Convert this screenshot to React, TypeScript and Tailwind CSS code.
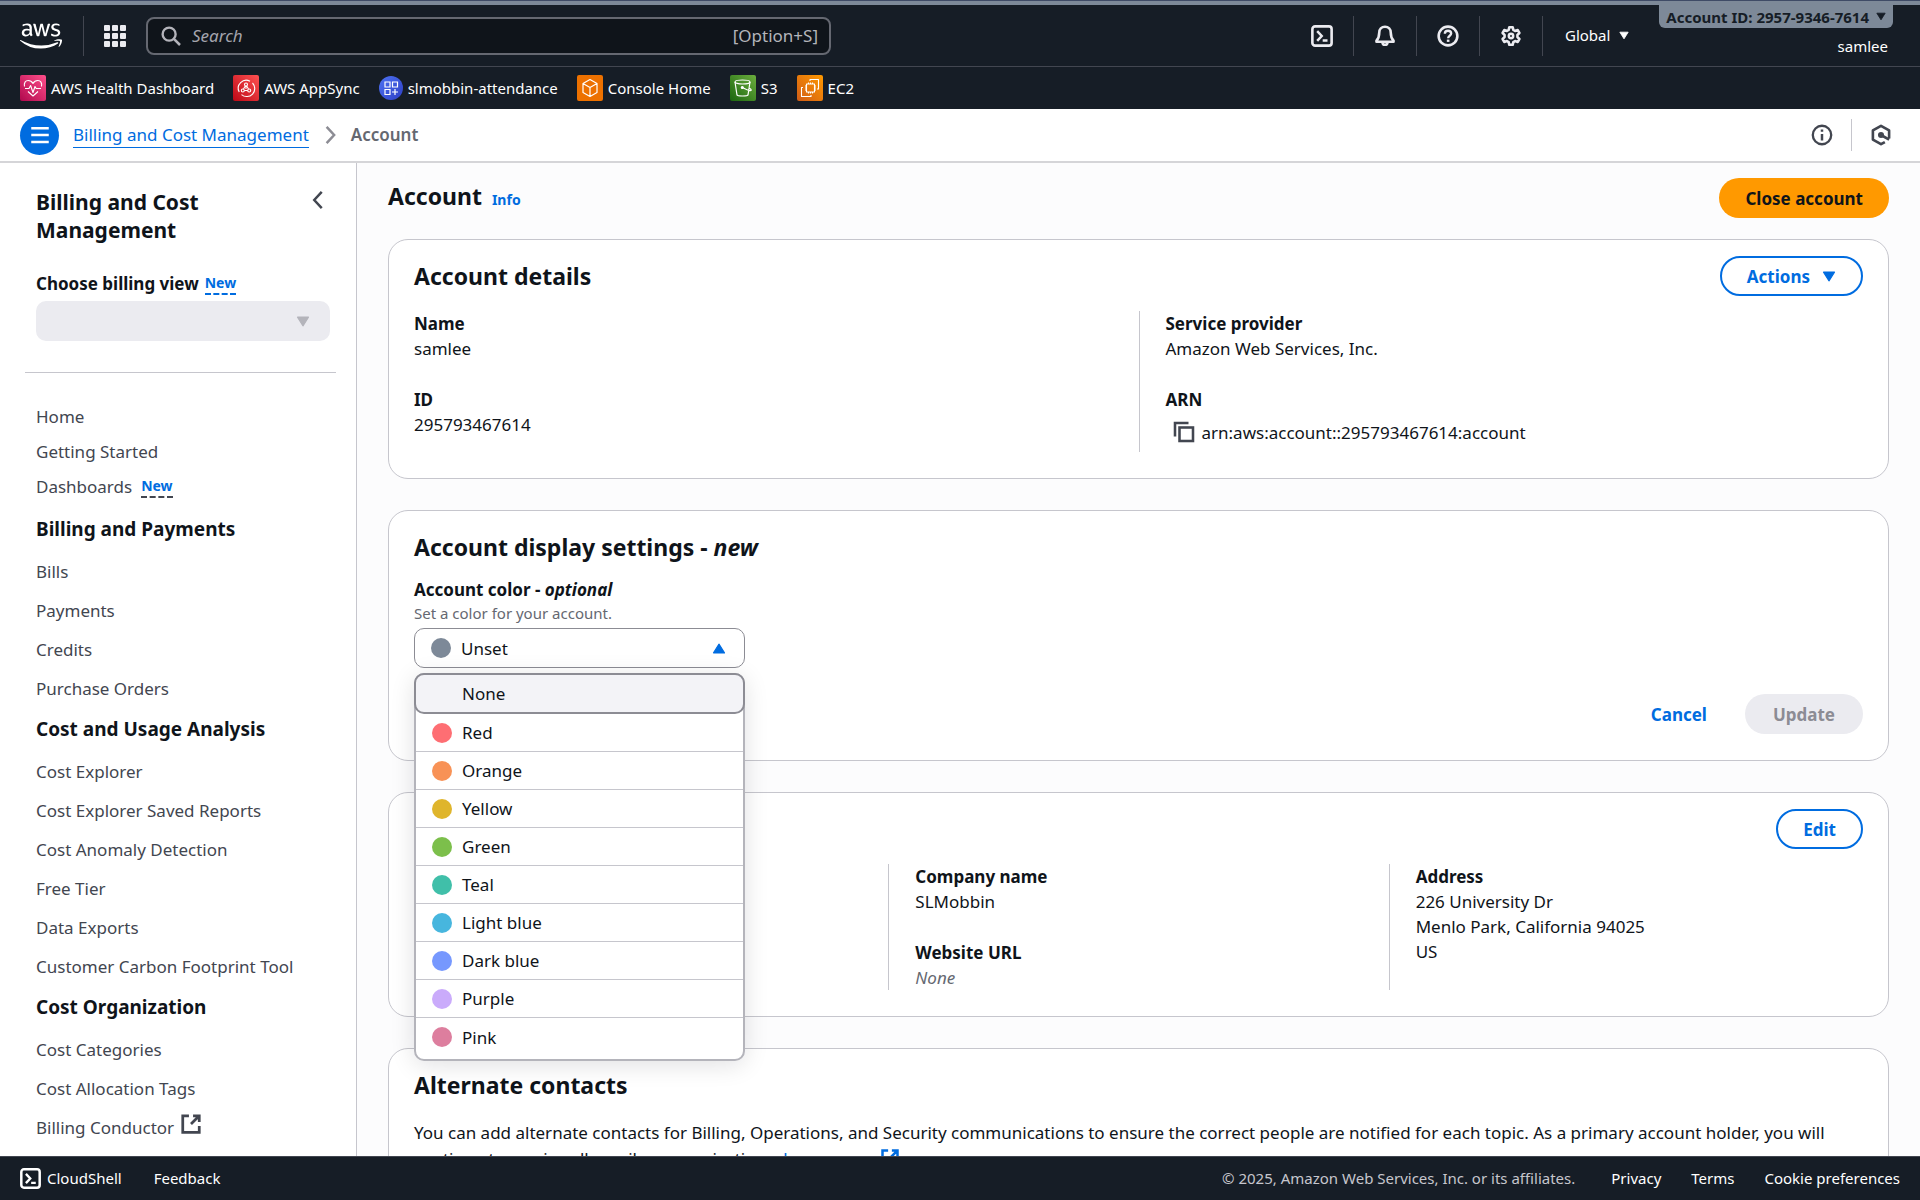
import type { ReactNode } from "react";
import { FaAws } from "react-icons/fa";

type IconProps = { className?: string };

function Icon({ className = "size-5", children }: IconProps & { children: ReactNode }) {
  return (
    <svg
      viewBox="0 0 16 16"
      className={className}
      fill="none"
      stroke="currentColor"
      strokeWidth="2"
      strokeLinejoin="round"
      aria-hidden="true"
    >
      {children}
    </svg>
  );
}

const TriangleDown = ({ className }: IconProps) => (
  <svg viewBox="0 0 12 10" className={className} fill="currentColor" stroke="currentColor" strokeLinejoin="round" aria-hidden="true">
    <path d="M1 1h10L6 9z" />
  </svg>
);

const TriangleUp = ({ className }: IconProps) => (
  <svg viewBox="0 0 12 10" className={className} fill="currentColor" stroke="currentColor" strokeLinejoin="round" aria-hidden="true">
    <path d="M1 9h10L6 1z" />
  </svg>
);

const ShellIcon = ({ className }: IconProps) => (
  <Icon className={className}>
    <rect x="1" y="1" width="14" height="14" rx="2" strokeWidth="1.9" />
    <path d="M4.5 4.5 7.8 8l-3.3 3.5M8.5 11.3h3.5" strokeWidth="1.8" strokeLinejoin="miter" />
  </Icon>
);

const BellIcon = () => (
  <Icon className="size-[22px]">
    <path
      d="M8 1.3c-2.500 0-4.200 1.900-4.200 4.300 0 3-.7 4.400-2 5.800v.8h12.400v-.8c-1.300-1.400-2-2.800-2-5.800 0-2.400-1.700-4.300-4.200-4.300z"
      strokeWidth="1.900"
    />
    <path d="M6.200 12.500c0 1.200.8 1.900 1.800 1.900s1.800-.7 1.800-1.900" strokeWidth="1.900" />
  </Icon>
);

const HelpIcon = () => (
  <Icon className="size-[22px]">
    <circle cx="8" cy="8" r="6.800" strokeWidth="1.900" />
    <path d="M5.700 6.400c0-1.300 1-2.200 2.300-2.200s2.300.9 2.300 2c0 1.600-2.200 1.600-2.200 3.400" strokeWidth="1.700" />
    <path d="M8.100 10.600v1.700" strokeWidth="1.900" />
  </Icon>
);

const GearIcon = () => (
  <Icon className="size-[22px]">
    <path
      d="M6.800 1.100h2.400l.5 1.900 1.300.8 1.900-.6 1.200 2.100-1.400 1.400v1.600l1.400 1.400-1.200 2.100-1.900-.6-1.300.8-.5 1.900H6.800L6.300 12 5 11.200l-1.900.6-1.200-2.100 1.400-1.400V6.700L1.900 5.300l1.200-2.100L5 3.800 6.300 3z"
      strokeWidth="1.900"
      transform="translate(0 .5)"
    />
    <circle cx="8" cy="8" r="1.600" strokeWidth="1.800" />
  </Icon>
);

const ExternalIcon = ({ className }: IconProps) => (
  <Icon className={className}>
    <path d="M6.500 2H2v12h12V9.500M9.500 2H14v4.500M14 2 8 8" strokeLinejoin="miter" />
  </Icon>
);

const CopyIcon = () => (
  <Icon className="size-6">
    <path d="M2 11V2h9" strokeWidth="1.700" strokeLinejoin="miter" />
    <rect x="5" y="5" width="9" height="9" strokeWidth="1.700" strokeLinejoin="miter" />
  </Icon>
);

const InfoIcon = () => (
  <Icon className="size-[22px]">
    <circle cx="8" cy="8" r="6.700" strokeWidth="1.700" />
    <path d="M8 7.200V12M8 4v1.700" strokeWidth="1.800" />
  </Icon>
);

const HexIcon = () => (
  <Icon className="size-[22px]">
    <path d="M13.900 10.600V4.700L8 1.300 2.100 4.700v6.600L8 14.700l2.800-1.600" strokeWidth="1.900" />
    <circle cx="8" cy="8" r="2.200" fill="currentColor" stroke="none" />
    <path d="m8 8 5.900 3.400" strokeWidth="1.900" />
  </Icon>
);

const HealthTile = () => (
  <svg viewBox="0 0 26 26" className="size-[26px]" fill="none" stroke="white" strokeWidth="1.100" strokeLinejoin="round" aria-hidden="true">
    <defs>
      <linearGradient id="health" x1="0" y1="1" x2="1" y2="0">
        <stop stopColor="#b0084d" />
        <stop offset="1" stopColor="#ff4f8b" />
      </linearGradient>
    </defs>
    <rect width="26" height="26" rx="2" fill="url(#health)" stroke="none" />
    <path d="M4.500 11.500c-.8-3.600 1-6 3.700-6 2.300 0 3.800 1.100 4.800 2.900 1-1.800 2.500-2.900 4.800-2.900 2.700 0 4.500 2.400 3.700 6" />
    <path d="M5 13.500h4l1.600-3 2.400 7 2-6 1.200 2h4.800" />
    <path d="M8 16.500l5 4.500 5-4.500" />
  </svg>
);

const AppSyncTile = () => (
  <svg viewBox="0 0 26 26" className="size-[26px]" fill="none" stroke="white" strokeWidth="1.100" aria-hidden="true">
    <defs>
      <linearGradient id="appsync" x1="0" y1="1" x2="1" y2="0">
        <stop stopColor="#bd0816" />
        <stop offset="1" stopColor="#ff5252" />
      </linearGradient>
    </defs>
    <rect width="26" height="26" rx="2" fill="url(#appsync)" stroke="none" />
    <path d="M17 6.200A8 8 0 0 0 6.200 17M8.500 19.600A8 8 0 0 0 19.500 8" />
    <circle cx="13" cy="9.500" r="1.500" />
    <circle cx="9.800" cy="15.500" r="1.500" />
    <circle cx="16.200" cy="15.500" r="1.500" />
    <path d="M12.300 11l-1.800 3M13.700 11l1.800 3M11.300 15.500h3.400M13 11v3" />
  </svg>
);

const AppTile = () => (
  <svg viewBox="0 0 24 24" className="size-6" fill="none" stroke="white" strokeWidth="1.200" aria-hidden="true">
    <defs>
      <linearGradient id="app" x1="0" y1="0" x2="1" y2="1">
        <stop stopColor="#4d72f3" />
        <stop offset="1" stopColor="#2e3fc4" />
      </linearGradient>
    </defs>
    <circle cx="12" cy="12" r="12" fill="url(#app)" stroke="none" />
    <path d="M6 6h5v5H6zM13.500 6h5v5h-5zM6 13.500h5v5H6zM16 13v6M13 16h6" />
  </svg>
);

const ConsoleTile = () => (
  <svg viewBox="0 0 26 26" className="size-[26px]" fill="none" stroke="white" strokeWidth="1.200" strokeLinejoin="round" aria-hidden="true">
    <rect width="26" height="26" rx="2" fill="#ed7100" stroke="none" />
    <path d="M13 4.500l7 4v9l-7 4-7-4v-9zM6 8.500l7 4 7-4M13 12.500v9" />
  </svg>
);

const S3Tile = () => (
  <svg viewBox="0 0 26 26" className="size-[26px]" fill="none" stroke="white" strokeWidth="1.200" strokeLinejoin="round" aria-hidden="true">
    <defs>
      <linearGradient id="s3" x1="0" y1="1" x2="1" y2="0">
        <stop stopColor="#1b660f" />
        <stop offset="1" stopColor="#6cae3e" />
      </linearGradient>
    </defs>
    <rect width="26" height="26" rx="2" fill="url(#s3)" stroke="none" />
    <ellipse cx="12.500" cy="7" rx="7.500" ry="2" />
    <path d="M5 7l2 13c.4 1.300 10.600 1.300 11 0L20 7M12.500 12.500c3 1.800 6.500 3.300 8.500 3 .8-.8-1.500-2.300-2-2.500" />
    <circle cx="12.300" cy="12.500" r="1" fill="white" />
  </svg>
);

const Ec2Tile = () => (
  <svg viewBox="0 0 26 26" className="size-[26px]" fill="none" stroke="white" strokeWidth="1.100" strokeLinejoin="round" aria-hidden="true">
    <defs>
      <linearGradient id="ec2" x1="0" y1="1" x2="1" y2="0">
        <stop stopColor="#d05c17" />
        <stop offset="1" stopColor="#f90" />
      </linearGradient>
    </defs>
    <rect width="26" height="26" rx="2" fill="url(#ec2)" stroke="none" />
    <path d="M9.500 9h8v8h-8zM8 11h1.500M8 13h1.500M8 15h1.500M17.500 11H19M17.500 13H19M17.500 15H19M11.500 7.500V9M13.500 7.500V9M15.500 7.500V9M11.500 17v1.500M13.500 17v1.500M15.500 17v1.500" />
    <path d="M13 6V4.500h8.500V14h-1.500M6 12.500H4.500v9H14V20" />
  </svg>
);

const favorites: { label: string; icon: ReactNode }[] = [
  { label: "AWS Health Dashboard", icon: <HealthTile /> },
  { label: "AWS AppSync", icon: <AppSyncTile /> },
  { label: "slmobbin-attendance", icon: <AppTile /> },
  { label: "Console Home", icon: <ConsoleTile /> },
  { label: "S3", icon: <S3Tile /> },
  { label: "EC2", icon: <Ec2Tile /> },
];

const utilities: { label: string; icon: ReactNode }[] = [
  { label: "CloudShell", icon: <ShellIcon className="size-[22px]" /> },
  { label: "Notifications", icon: <BellIcon /> },
  { label: "Support", icon: <HelpIcon /> },
  { label: "Settings", icon: <GearIcon /> },
];

const sections: { title: string; links: string[] }[] = [
  { title: "Billing and Payments", links: ["Bills", "Payments", "Credits", "Purchase Orders"] },
  {
    title: "Cost and Usage Analysis",
    links: [
      "Cost Explorer",
      "Cost Explorer Saved Reports",
      "Cost Anomaly Detection",
      "Free Tier",
      "Data Exports",
      "Customer Carbon Footprint Tool",
    ],
  },
  { title: "Cost Organization", links: ["Cost Categories", "Cost Allocation Tags", "Billing Conductor"] },
];

const colors: { name: string; swatch: string }[] = [
  { name: "Red", swatch: "bg-[#fe6e73]" },
  { name: "Orange", swatch: "bg-[#f89256]" },
  { name: "Yellow", swatch: "bg-[#dfb52c]" },
  { name: "Green", swatch: "bg-[#7cbf4b]" },
  { name: "Teal", swatch: "bg-[#40bfa9]" },
  { name: "Light blue", swatch: "bg-[#47b6de]" },
  { name: "Dark blue", swatch: "bg-[#7698fe]" },
  { name: "Purple", swatch: "bg-[#caabfb]" },
  { name: "Pink", swatch: "bg-[#dd7e9e]" },
];

function TopNav() {
  return (
    <header className="shrink-0 bg-[#161d26] text-white">
      <div className="h-[5px] border-t border-[#3f4b66] bg-[#7d8998]" />
      <div className="flex h-[62px] items-center border-b border-[#424650]">
        <a href="#aws" aria-label="AWS home" className="ml-5 flex w-[63px]">
          <FaAws className="size-[42px]" />
        </a>
        <div className="h-10 w-px bg-[#424650]" />
        <button type="button" aria-label="Services" className="ml-5 grid grid-cols-3 gap-[2px]">
          {Array.from({ length: 9 }, (_, i) => (
            <span key={i} className="size-[6px] rounded-[1px] bg-[#ebebf0]" />
          ))}
        </button>
        <label className="ml-5 flex h-[38px] w-full max-w-[685px] items-center rounded-lg border-2 border-[#656871] bg-[#0f141a] pr-[11px] pl-[13px] text-[#b4b4bb]">
          <Icon className="size-5">
            <circle cx="6.500" cy="6.500" r="5.200" strokeWidth="1.900" />
            <path d="m10.300 10.300 4.900 4.900" />
          </Icon>
          <input
            type="search"
            aria-label="Search"
            placeholder="Search"
            className="ml-[11px] min-w-0 flex-1 bg-transparent text-[17px] outline-none placeholder:text-[#a4a4ad] placeholder:italic"
          />
          <span className="text-[17px]">[Option+S]</span>
        </label>
        <div className="ml-auto flex items-center">
          {utilities.map((u) => (
            <button
              key={u.label}
              type="button"
              aria-label={u.label}
              className="flex h-10 w-[63px] items-center justify-center border-r border-[#424650] text-[#ebebf0]"
            >
              {u.icon}
            </button>
          ))}
          <button type="button" className="ml-[22px] flex items-center gap-[9px] text-[15px] whitespace-nowrap">
            Global <TriangleDown className="h-[9px] w-[10px]" />
          </button>
        </div>
        <div className="mr-[27px] ml-[30px] flex flex-col items-end self-start">
          <button
            type="button"
            className="flex h-[23px] items-center gap-[7px] rounded-b-md bg-[#7d8998] px-[7px] text-[15px] leading-5 font-bold whitespace-nowrap text-[#161d26]"
          >
            Account ID: 2957-9346-7614
            <TriangleDown className="h-[9px] w-[10px]" />
          </button>
          <span className="mt-2 mr-[5px] text-[15px] leading-5">samlee</span>
        </div>
      </div>
      <nav aria-label="Favorites" className="flex h-[42px] items-center gap-[19px] pl-5">
        {favorites.map((f) => (
          <a key={f.label} href="#favorite" className="flex items-center gap-[5px] text-[15px] leading-5 whitespace-nowrap">
            {f.icon}
            {f.label}
          </a>
        ))}
      </nav>
    </header>
  );
}

function Breadcrumbs() {
  return (
    <div className="flex h-[54px] shrink-0 items-center border-b-2 border-[#d5d5d8] bg-white pl-5 text-[17px]">
      <button
        type="button"
        aria-label="Open navigation"
        className="flex size-[39px] items-center justify-center rounded-full bg-[#006ce0] text-white"
      >
        <Icon className="size-5">
          <path d="M1 2.500h14M1 8h14M1 13.500h14" />
        </Icon>
      </button>
      <nav aria-label="Breadcrumb" className="ml-[14px] flex items-center">
        <a href="#billing" className="border-b border-[#006ce0] leading-6 text-[#006ce0]">
          Billing and Cost Management
        </a>
        <Icon className="ml-3 size-5 text-[#8c8c94]">
          <path d="m4.500 1.500 6 6.500-6 6.500" strokeLinejoin="miter" />
        </Icon>
        <span className="ml-[10px] font-semibold text-[#656871]">Account</span>
      </nav>
      <div className="mr-7 ml-auto flex items-center text-[#424650]">
        <button type="button" aria-label="Information">
          <InfoIcon />
        </button>
        <span className="mr-[18px] ml-[18px] h-8 w-px bg-[#c6c6cd]" />
        <button type="button" aria-label="Diagnostics">
          <HexIcon />
        </button>
      </div>
    </div>
  );
}

function Sidebar() {
  const link = "text-[17px] leading-[25px] text-[#424650]";
  return (
    <aside className="w-[357px] shrink-0 overflow-hidden border-r border-[#c6c6cd] bg-white">
      <div className="px-[26px]">
        <div className="flex items-start justify-between pt-[25px] pl-[10px]">
          <h2 className="w-52 text-[21px] leading-7 font-bold text-[#0f141a]">Billing and Cost Management</h2>
          <button type="button" aria-label="Close navigation" className="mt-[2px] mr-[2px] text-[#424650]">
            <Icon className="size-5">
              <path d="m11 1.500-6 6.500 6 6.500" strokeLinejoin="miter" />
            </Icon>
          </button>
        </div>
        <div className="mt-[27px] flex items-center gap-[6px] pl-[10px]">
          <label htmlFor="billing-view" className="text-[17px] leading-[25px] font-bold text-[#0f141a]">
            Choose billing view
          </label>
          <a href="#new-view" className="border-b-2 border-dashed border-[#006ce0] text-[14px] leading-5 font-bold text-[#006ce0]">
            New
          </a>
        </div>
        <div className="relative mt-[5px] ml-[10px]">
          <select
            id="billing-view"
            disabled
            className="h-10 w-full appearance-none rounded-[10px] bg-[#ebebf0]"
          />
          <TriangleDown className="pointer-events-none absolute top-[15px] right-5 h-[11px] w-[14px] text-[#b4b4bb]" />
        </div>
      </div>
      <hr className="mr-5 ml-[25px] mt-[31px] border-[#c6c6cd]" />
      <nav aria-label="Billing and Cost Management" className="mt-[31px] pl-9">
        <ul className="mb-[18px] flex flex-col gap-[10px]">
          <li className="flex">
            <a href="#home" className={link}>Home</a>
          </li>
          <li className="flex">
            <a href="#start" className={link}>Getting Started</a>
          </li>
          <li className="flex h-[25px] items-center gap-[9px]">
            <a href="#dashboards" className={link}>Dashboards</a>
            <a href="#new-dashboards" className="border-b-2 border-dashed border-[#424650] text-[14px] leading-5 font-bold text-[#006ce0]">
              New
            </a>
          </li>
        </ul>
        {sections.map((s) => (
          <section key={s.title} className="mb-4">
            <h3 className="text-[19px] leading-[25px] font-bold text-[#0f141a]">{s.title}</h3>
            <ul className="mt-[17px] flex flex-col gap-[14px]">
              {s.links.map((l) => (
                <li key={l} className="flex">
                  <a href="#section" className="flex items-center gap-[6px] text-[17px] leading-[25px] text-[#424650]">
                    {l}
                    {l === "Billing Conductor" && <ExternalIcon className="-mt-2 size-[22px]" />}
                  </a>
                </li>
              ))}
            </ul>
          </section>
        ))}
      </nav>
    </aside>
  );
}

function Card({ title, action, children }: { title?: ReactNode; action?: ReactNode; children: ReactNode }) {
  return (
    <section className="rounded-[20px] border border-[#c6c6cd] bg-white px-[25px] pt-4 pb-[26px]">
      <div className="flex h-10 items-center justify-between">
        <h2 className="text-[23px] leading-7 font-bold">{title}</h2>
        {action}
      </div>
      {children}
    </section>
  );
}

function Field({ label, children }: { label: string; children: ReactNode }) {
  return (
    <div>
      <dt className="font-bold">{label}</dt>
      <dd>{children}</dd>
    </div>
  );
}

function DividedColumn({ children }: { children?: ReactNode }) {
  return <dl className="-ml-[26px] flex flex-col gap-[26px] border-l border-[#c6c6cd] pl-[26px]">{children}</dl>;
}

const outlineButton =
  "flex h-10 items-center gap-3 rounded-full border-2 border-[#006ce0] bg-white px-[25px] text-[17px] font-bold text-[#006ce0]";

function ColorSelect() {
  return (
    <div className="relative w-[331px]">
      <button
        type="button"
        id="account-color"
        aria-labelledby="account-color-label account-color"
        aria-haspopup="listbox"
        aria-expanded="true"
        className="mt-1 flex h-10 w-full items-center rounded-[10px] border border-[#8c8c94] bg-white pr-[18px] pl-4"
      >
        <span className="size-5 rounded-full bg-[#7d8998]" />
        <span className="ml-[10px]">Unset</span>
        <TriangleUp className="ml-auto h-[11px] w-[14px] text-[#006ce0]" />
      </button>
      <ul
        role="listbox"
        aria-label="Account color"
        className="absolute top-full left-0 z-10 mt-[5px] w-full rounded-[10px] border-2 border-[#b4b4bb] bg-white pb-[3px] shadow-[0_4px_24px_rgba(0,7,22,0.12)]"
      >
        <li
          role="option"
          aria-selected="true"
          className="-mx-[2px] -mt-[2px] flex h-[41px] items-center rounded-[10px] border-2 border-[#8c8c94] bg-[#f3f3f7] pl-[46px]"
        >
          None
        </li>
        {colors.map((c) => (
          <li
            key={c.name}
            role="option"
            aria-selected="false"
            className="flex h-[38px] items-center gap-[10px] border-b border-[#c6c6cd] pl-4 last:border-b-0"
          >
            <span className={`size-5 rounded-full ${c.swatch}`} />
            {c.name}
          </li>
        ))}
      </ul>
    </div>
  );
}

function AccountPage() {
  return (
    <main className="min-w-0 flex-1 overflow-y-auto px-[31px] pb-8 text-[17px] leading-[25px] [scrollbar-width:none]">
      <div className="flex items-center justify-between pt-[15px]">
        <h1 className="flex items-baseline gap-[10px] text-[23px] leading-7 font-bold">
          Account
          <a href="#info" className="text-[14px] font-bold text-[#006ce0]">Info</a>
        </h1>
        <button type="button" className="h-10 rounded-full bg-[#ff9900] px-[26px] font-bold">
          Close account
        </button>
      </div>
      <div className="mt-[21px] flex flex-col gap-[31px]">
        <Card
          title="Account details"
          action={
            <button type="button" className={outlineButton}>
              Actions <TriangleDown className="h-[11px] w-[14px]" />
            </button>
          }
        >
          <div className="mt-[15px] grid grid-cols-2 gap-[52px]">
            <dl className="flex flex-col gap-[26px]">
              <Field label="Name">samlee</Field>
              <Field label="ID">295793467614</Field>
            </dl>
            <DividedColumn>
              <Field label="Service provider">Amazon Web Services, Inc.</Field>
              <Field label="ARN">
                <span className="flex h-10 items-center gap-[6px] pl-[6px]">
                  <button type="button" aria-label="Copy ARN" className="text-[#424650]">
                    <CopyIcon />
                  </button>
                  arn:aws:account::295793467614:account
                </span>
              </Field>
            </DividedColumn>
          </div>
        </Card>
        <Card title={<>Account display settings - <em>new</em></>}>
          <div className="mt-[10px]">
            <div id="account-color-label" className="font-bold">
              Account color - <em>optional</em>
            </div>
            <p className="text-[15px] leading-[22px] text-[#656871]">Set a color for your account.</p>
            <ColorSelect />
          </div>
          <div className="mt-[26px] flex h-10 items-center justify-end gap-[38px]">
            <button type="button" className="font-bold text-[#006ce0]">Cancel</button>
            <button type="button" disabled className="h-10 rounded-full bg-[#ebebf0] px-7 font-bold text-[#8c8c94]">
              Update
            </button>
          </div>
        </Card>
        <Card action={<button type="button" className={outlineButton}>Edit</button>}>
          <div className="mt-[15px] grid grid-cols-3 gap-[52px]">
            <div />
            <DividedColumn>
              <Field label="Company name">SLMobbin</Field>
              <Field label="Website URL">
                <em className="text-[#656871]">None</em>
              </Field>
            </DividedColumn>
            <DividedColumn>
              <Field label="Address">
                226 University Dr
                <br />
                Menlo Park, California 94025
                <br />
                US
              </Field>
            </DividedColumn>
          </div>
        </Card>
        <Card title="Alternate contacts">
          <p className="mt-[15px] leading-[26px]">
            You can add alternate contacts for Billing, Operations, and Security communications to ensure the correct
            people are notified for each topic. As a primary account holder, you will continue to receive all email
            communications.{" "}
            <a href="#learn" className="text-[#006ce0]">
              Learn more <ExternalIcon className="mb-1 inline size-5" />
            </a>
          </p>
        </Card>
      </div>
    </main>
  );
}

function Footer() {
  return (
    <footer className="flex h-11 shrink-0 items-center border-t border-[#424650] bg-[#161d26] px-5 text-[15px] whitespace-nowrap text-white">
      <button type="button" className="flex items-center gap-[6px]">
        <ShellIcon className="size-[21px]" /> CloudShell
      </button>
      <button type="button" className="ml-8">Feedback</button>
      <span className="ml-auto text-[#c6c6cd]">© 2025, Amazon Web Services, Inc. or its affiliates.</span>
      <a href="#privacy" className="ml-9">Privacy</a>
      <a href="#terms" className="ml-[30px]">Terms</a>
      <button type="button" className="ml-[30px]">Cookie preferences</button>
    </footer>
  );
}

export default function App() {
  return (
    <div className="flex h-screen flex-col bg-[#fcfcfd] font-['Noto_Sans','Open_Sans',sans-serif] text-[#0f141a]">
      <TopNav />
      <Breadcrumbs />
      <div className="flex min-h-0 flex-1">
        <Sidebar />
        <AccountPage />
      </div>
      <Footer />
    </div>
  );
}
